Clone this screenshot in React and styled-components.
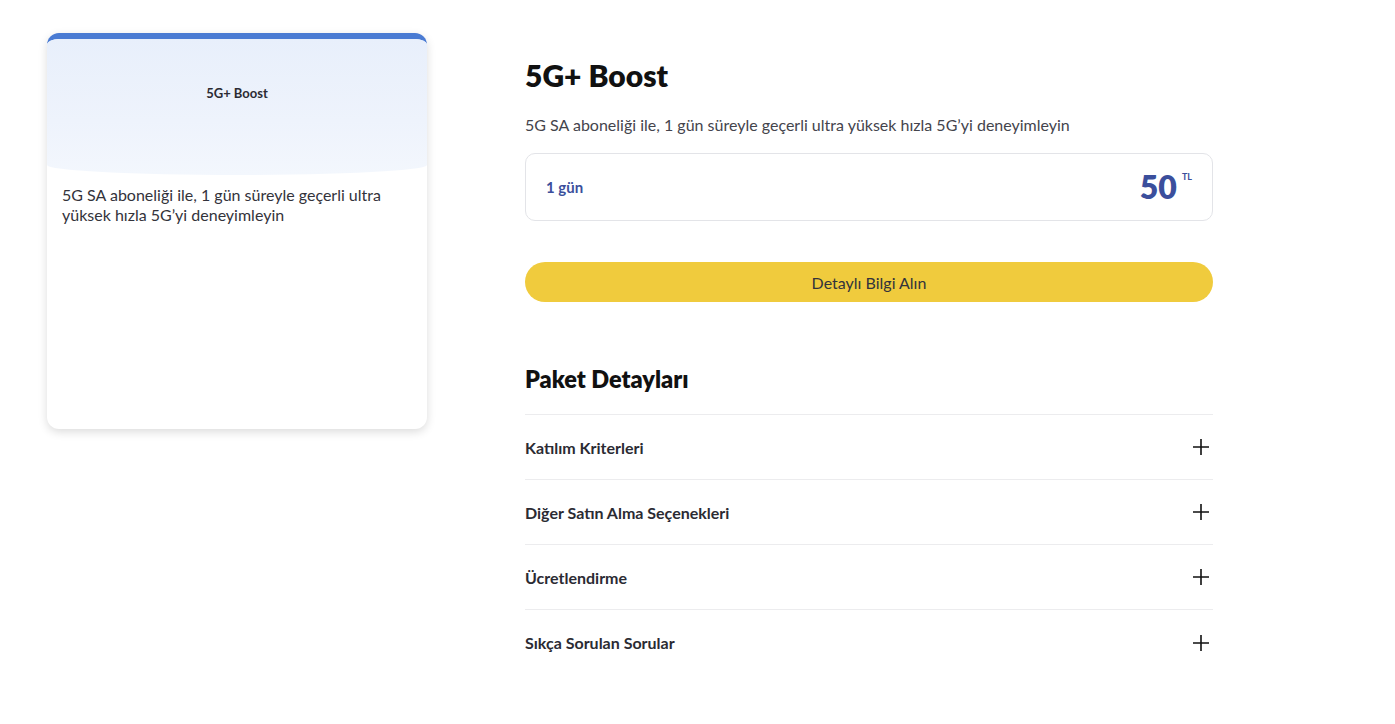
import React from 'react';
import styled, { createGlobalStyle } from 'styled-components';

const GlobalStyle = createGlobalStyle`
  body {
    margin: 0;
    background: #fff;
    font-family: 'Lato', 'Liberation Sans', sans-serif;
    color: #2b2b33;
  }
`;

const Page = styled.div`
  display: flex;
  align-items: flex-start;
  padding: 33px 0 0 47px;
  gap: 98px;
`;

const Card = styled.div`
  width: 380px;
  height: 396px;
  border-radius: 12px;
  background: #fff;
  box-shadow: 0 3px 10px rgba(0, 0, 0, 0.14);
  border-top: 6px solid #4a7bd3;
  overflow: hidden;
  box-sizing: border-box;
`;

const CardHead = styled.div`
  height: 136px;
  background: linear-gradient(180deg, #e8effb 0%, #eef3fc 60%, #f3f7fd 100%);
  border-radius: 0 0 50% 50% / 0 0 10px 10px;
  display: flex;
  justify-content: center;
  padding-top: 46px;
  box-sizing: border-box;
`;

const CardTitle = styled.div`
  font-size: 13px;
  font-weight: 700;
  color: #2b2b33;
`;

const CardText = styled.p`
  margin: 10px 15px 0;
  font-size: 16px;
  line-height: 20px;
  color: #33333b;
`;

const Main = styled.div`
  width: 688px;
  padding-top: 24px;
`;

const Title = styled.h1`
  margin: 0;
  font-size: 30px;
  font-weight: 800;
  color: #111;
  line-height: 36px;
`;

const Subtitle = styled.p`
  margin: 22px 0 0;
  font-size: 16px;
  color: #44444c;
  line-height: 20px;
`;

const PriceBox = styled.div`
  margin-top: 18px;
  height: 68px;
  border: 1px solid #e3e4e8;
  border-radius: 10px;
  display: flex;
  align-items: center;
  justify-content: space-between;
  padding: 0 20px;
  box-sizing: border-box;
`;

const Duration = styled.span`
  font-size: 15px;
  font-weight: 700;
  color: #3b4f9c;
`;

const Price = styled.span`
  display: flex;
  align-items: flex-start;
  gap: 5px;
  color: #3b4f9c;
  font-weight: 800;
  font-size: 32px;
  line-height: 34px;
`;

const Currency = styled.sup`
  font-size: 9px;
  line-height: 14px;
  font-weight: 700;
`;

const Button = styled.button`
  margin-top: 41px;
  width: 100%;
  height: 40px;
  border: none;
  border-radius: 20px;
  background: #f0cb3d;
  font-family: inherit;
  font-size: 16px;
  color: #33333b;
`;

const SectionTitle = styled.h2`
  margin: 63px 0 0;
  font-size: 23.5px;
  font-weight: 800;
  color: #111;
  line-height: 28px;
  padding-bottom: 21px;
  border-bottom: 1px solid #ececee;
`;

const Row = styled.div`
  height: 65px;
  display: flex;
  align-items: center;
  justify-content: space-between;
  border-bottom: ${({ $last }) => ($last ? 'none' : '1px solid #ececee')};
  box-sizing: border-box;
  font-size: 16px;
  font-weight: 700;
  color: #2b2b33;
`;

const PlusIcon = () => (
  <svg width="18" height="18" viewBox="0 0 18 18" style={{ marginRight: 3 }}>
    <path d="M9 1v16M1 9h16" stroke="#111" strokeWidth="1.6" />
  </svg>
);

const items = [
  'Katılım Kriterleri',
  'Diğer Satın Alma Seçenekleri',
  'Ücretlendirme',
  'Sıkça Sorulan Sorular',
];

export default function App() {
  return (
    <>
      <GlobalStyle />
      <Page>
        <Card>
          <CardHead>
            <CardTitle>5G+ Boost</CardTitle>
          </CardHead>
          <CardText>
            5G SA aboneliği ile, 1 gün süreyle geçerli ultra yüksek hızla 5G’yi deneyimleyin
          </CardText>
        </Card>
        <Main>
          <Title>5G+ Boost</Title>
          <Subtitle>5G SA aboneliği ile, 1 gün süreyle geçerli ultra yüksek hızla 5G’yi deneyimleyin</Subtitle>
          <PriceBox>
            <Duration>1 gün</Duration>
            <Price>
              50<Currency>TL</Currency>
            </Price>
          </PriceBox>
          <Button>Detaylı Bilgi Alın</Button>
          <SectionTitle>Paket Detayları</SectionTitle>
          {items.map((item, i) => (
            <Row key={item} $last={i === items.length - 1}>
              {item}
              <PlusIcon />
            </Row>
          ))}
        </Main>
      </Page>
    </>
  );
}
